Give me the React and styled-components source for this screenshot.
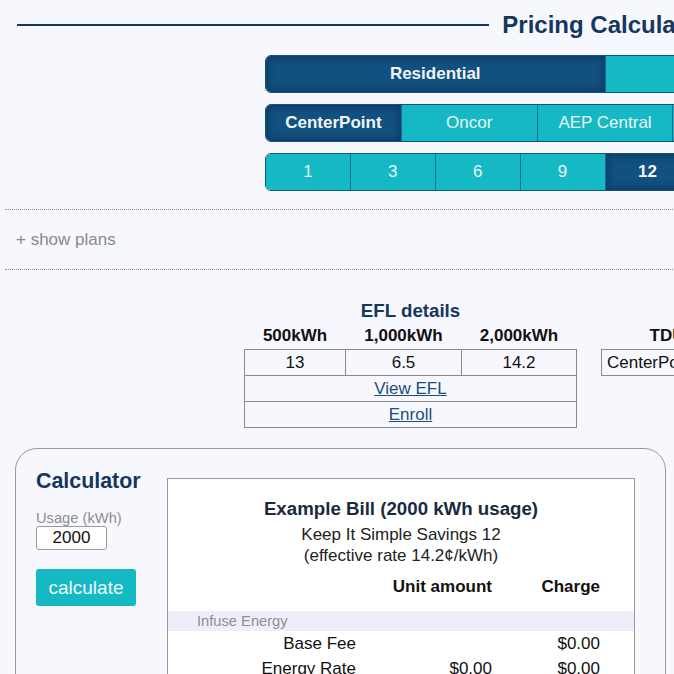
import React, { useState } from 'react';
import styled, { createGlobalStyle } from 'styled-components';

const GlobalStyle = createGlobalStyle`
html, body {
  margin: 0;
  padding: 0;
  background: #f7f8fd;
  overflow: hidden;
  font-family: "Liberation Sans", Arial, sans-serif;
}
`;

const Page = styled.div`
width: 1200px;
padding-left: 5px;
`;

const Header = styled.div`
display: flex;
align-items: center;
padding: 8px 12px 0 12px;
height: 34px;
`;

const Rule = styled.div`
flex: 1;
height: 2px;
background: #15375d;
`;

const Title = styled.h1`
margin: 0 13px;
font-size: 24px;
font-weight: bold;
color: #15375d;
white-space: nowrap;
`;

const Groups = styled.div`
display: flex;
flex-direction: column;
align-items: center;
gap: 11px;
margin-top: 13px;
`;

const Group = styled.div`
display: flex;
width: 680px;
height: 38px;
border: 1px solid #0f5383;
border-radius: 6px;
overflow: hidden;
box-sizing: border-box;
`;

const Seg = styled.button`
flex: 1;
border: none;
border-left: ${p => (p.first ? 'none' : '1px solid #146c97')};
background: ${p => (p.active ? '#12507f' : '#15b9c3')};
box-shadow: ${p => (p.active ? 'inset 0 0 8px rgba(0,20,50,0.55)' : 'none')};
color: ${p => (p.active ? '#f2f4f7' : '#eaf6f7')};
font-family: "Liberation Sans", Arial, sans-serif;
font-size: 17px;
font-weight: ${p => (p.active ? 'bold' : 'normal')};
padding: 0;
cursor: pointer;
`;

const Dotted = styled.div`
border-top: 1px dotted #8a8a8a;
margin-top: ${p => p.top}px;
`;

const ShowPlans = styled.div`
padding: 20px 11px;
font-size: 17px;
color: #8a8a8a;
line-height: 19px;
`;

const EflRow = styled.div`
display: flex;
align-items: flex-start;
gap: 24px;
padding-left: 239px;
margin-top: 30px;
`;

const EflBlock = styled.div`
display: flex;
flex-direction: column;
align-items: center;
`;

const EflTitle = styled.div`
font-size: 18.7px;
font-weight: bold;
color: #15375d;
line-height: 22px;
`;

const Table = styled.table`
border-collapse: collapse;
font-size: 17px;
color: #111;
`;

const Th = styled.th`
font-weight: bold;
height: 27px;
padding: 0;
text-align: center;
`;

const Td = styled.td`
border: 1px solid #8a8a8a;
height: 25px;
padding: 0 5px;
text-align: ${p => p.align || 'center'};
width: ${p => (p.w ? p.w + 'px' : 'auto')};
`;

const Link = styled.a`
color: #1b4f7a;
text-decoration: underline;
`;

const TduBlock = styled.div`
padding-top: 22px;
`;

const Card = styled.div`
margin: 20px 0 0 10px;
width: 651px;
height: 300px;
border: 1px solid #9a9a9a;
border-radius: 22px;
box-sizing: border-box;
display: flex;
padding: 29px 30px 0 20px;
gap: 31px;
`;

const Side = styled.div`
width: 100px;
display: flex;
flex-direction: column;
`;

const SideTitle = styled.div`
font-size: 21.4px;
font-weight: bold;
color: #15375d;
line-height: 24px;
margin-top: -9px;
`;

const Label = styled.label`
font-size: 14.7px;
color: #8f8f8f;
margin-top: 17px;
line-height: 16px;
`;

const Input = styled.input`
width: 71px;
height: 24px;
box-sizing: border-box;
border: 1px solid #9a9a9a;
border-radius: 3px;
background: #fff;
font-family: "Liberation Sans", Arial, sans-serif;
font-size: 17px;
text-align: center;
color: #111;
padding: 0;
`;

const CalcButton = styled.button`
margin-top: 19px;
width: 100px;
height: 37px;
border: none;
border-radius: 3px;
background: #15b9c3;
color: #eef7f8;
font-family: "Liberation Sans", Arial, sans-serif;
font-size: 19px;
padding: 0;
`;

const Bill = styled.div`
width: 469px;
background: #fff;
border: 1px solid #9a9a9a;
box-sizing: border-box;
height: 260px;
`;

const BillTitle = styled.div`
margin-top: 19px;
text-align: center;
font-size: 18.7px;
font-weight: bold;
color: #1a2a3d;
line-height: 22px;
`;

const BillSub = styled.div`
text-align: center;
font-size: 17px;
color: #222;
line-height: 21px;
margin-top: ${p => p.top || 0}px;
`;

const Grid = styled.div`
display: grid;
grid-template-columns: 188px 136px 108px 1fr;
margin-top: 10px;
`;

const Cell = styled.div`
text-align: right;
font-size: 17px;
font-weight: ${p => (p.head ? 'bold' : 'normal')};
color: #111;
height: ${p => p.h || 25}px;
line-height: ${p => p.h || 25}px;
`;

const Section = styled.div`
grid-column: 1 / -1;
background: #eeeefa;
height: 20px;
line-height: 20px;
margin-top: 13px;
padding-left: 29px;
font-size: 14.7px;
color: #8f8f8f;
`;

export default function App() {
  const [usage, setUsage] = useState('2000');
  const [type, setType] = useState('Residential');
  const [tdu, setTdu] = useState('CenterPoint');
  const [term, setTerm] = useState('12');

  const types = ['Residential', 'Commercial'];
  const tdus = ['CenterPoint', 'Oncor', 'AEP Central', 'AEP North', 'TNMP'];
  const terms = ['1', '3', '6', '9', '12', '18', '24', '36'];

  return (
    <Page>
      <GlobalStyle />
      <Header>
        <Rule />
        <Title>Pricing Calculator</Title>
        <Rule />
      </Header>
      <Groups>
        <Group>
          {types.map((t, i) => (
            <Seg key={t} first={i === 0} active={type === t} onClick={() => setType(t)}>{t}</Seg>
          ))}
        </Group>
        <Group>
          {tdus.map((t, i) => (
            <Seg key={t} first={i === 0} active={tdu === t} onClick={() => setTdu(t)}>{t}</Seg>
          ))}
        </Group>
        <Group>
          {terms.map((t, i) => (
            <Seg key={t} first={i === 0} active={term === t} onClick={() => setTerm(t)}>{t}</Seg>
          ))}
        </Group>
      </Groups>
      <Dotted top={18} />
      <ShowPlans>+ show plans</ShowPlans>
      <Dotted top={0} />
      <EflRow>
        <EflBlock>
          <EflTitle>EFL details</EflTitle>
          <Table>
            <thead>
              <tr>
                <Th>500kWh</Th>
                <Th>1,000kWh</Th>
                <Th>2,000kWh</Th>
              </tr>
            </thead>
            <tbody>
              <tr>
                <Td w={90}>13</Td>
                <Td w={105}>6.5</Td>
                <Td w={104}>14.2</Td>
              </tr>
              <tr>
                <Td colSpan={3}><Link href="#efl">View EFL</Link></Td>
              </tr>
              <tr>
                <Td colSpan={3}><Link href="#enroll">Enroll</Link></Td>
              </tr>
            </tbody>
          </Table>
        </EflBlock>
        <TduBlock>
          <Table>
            <thead>
              <tr>
                <Th>TDU</Th>
              </tr>
            </thead>
            <tbody>
              <tr>
                <Td w={120} align="left">CenterPoint</Td>
              </tr>
            </tbody>
          </Table>
        </TduBlock>
      </EflRow>
      <Card>
        <Side>
          <SideTitle>Calculator</SideTitle>
          <Label>Usage (kWh)</Label>
          <Input value={usage} onChange={e => setUsage(e.target.value)} />
          <CalcButton>calculate</CalcButton>
        </Side>
        <Bill>
          <BillTitle>Example Bill (2000 kWh usage)</BillTitle>
          <BillSub top={4}>Keep It Simple Savings 12</BillSub>
          <BillSub>(effective rate 14.2¢/kWh)</BillSub>
          <Grid>
            <Cell head h={22}></Cell>
            <Cell head h={22}>Unit amount</Cell>
            <Cell head h={22}>Charge</Cell>
            <Cell head h={22}></Cell>
            <Section>Infuse Energy</Section>
            <Cell>Base Fee</Cell>
            <Cell></Cell>
            <Cell>$0.00</Cell>
            <Cell></Cell>
            <Cell>Energy Rate</Cell>
            <Cell>$0.00</Cell>
            <Cell>$0.00</Cell>
            <Cell></Cell>
          </Grid>
        </Bill>
      </Card>
    </Page>
  );
}
